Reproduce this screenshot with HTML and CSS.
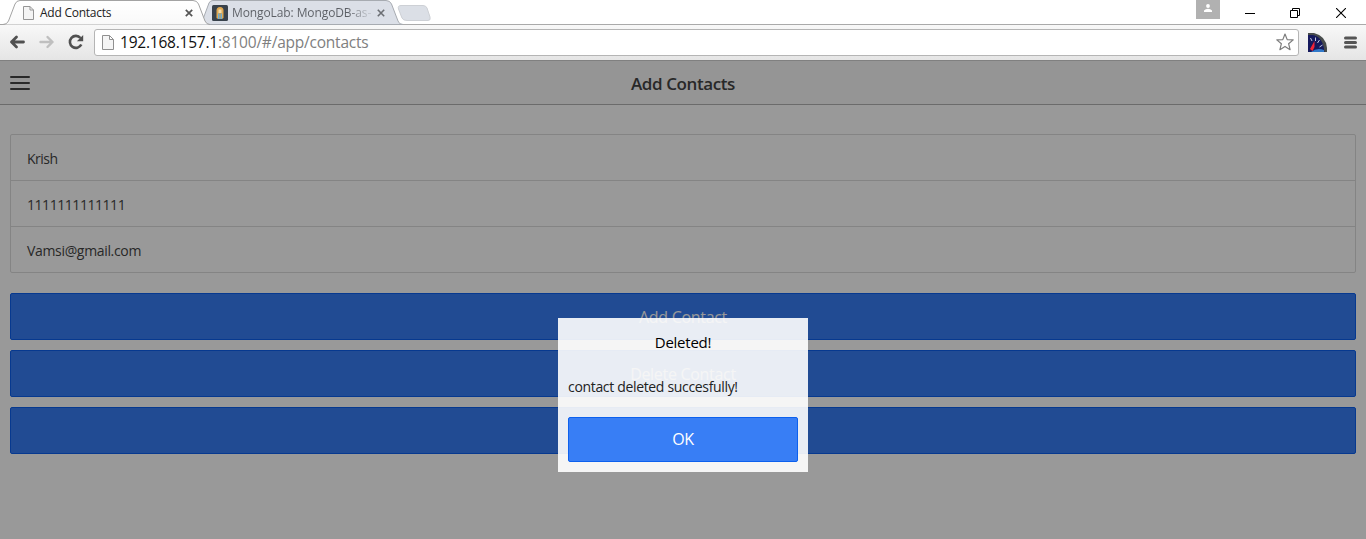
FILE: index.html
```html
<!DOCTYPE html>
<html lang="en">
<head>
<meta charset="utf-8">
<title>Add Contacts</title>
<link rel="stylesheet" href="styles.css">
</head>
<body>
<div class="browser">
  <div class="tabstrip">
    <svg class="tab-shapes" width="440" height="25" viewBox="0 0 440 25">
      <defs><linearGradient id="tabfill" x1="0" y1="0" x2="0" y2="1"><stop offset="0" stop-color="#fff"/><stop offset="1" stop-color="#f9f9f9"/></linearGradient></defs>
      <path d="M201 24.5 L209 3 Q210 .5 213 .5 H386 Q390 .5 391.500 4 L398 21 Q399 24.500 403 24.500Z" fill="#dbdfe7" stroke="#a7abb1"/>
      <path d="M401 5.500 H423 Q426 5.500 427 8 L430 17 Q431 20.500 428 20.500 H407 Q403 20.500 402 18 L398.500 9 Q397.500 5.500 401 5.500Z" fill="#dbdfe6" stroke="#cdd0d5"/>
      <path d="M0 24.500 H3 Q7 24.500 8.500 21 L15 4 Q16.500 .5 20 .5 H193 Q197 .5 198.500 4 L205 21 Q206.500 24.500 210 24.500" fill="url(#tabfill)" stroke="#a3a3a3"/>
    </svg>
    <div class="tab tab-active">
      <svg width="11" height="14" viewBox="0 0 11 14"><path d="M.5 .5H7L10.500 4V13.500H.5Z M7 .5V4H10.500" fill="#f4f4f4" stroke="#959595"/></svg>
      <span class="tab-title first">Add Contacts</span>
      <svg class="close" width="8" height="8" viewBox="0 0 8 8"><path d="M.8 .8L7.200 7.200M7.200 .8L.8 7.200" stroke="#555" stroke-width="1.700"/></svg>
    </div>
    <div class="tab tab-back">
      <svg width="16" height="16" viewBox="0 0 16 16"><rect width="16" height="16" rx="1.500" fill="#39424b"/><path d="M4.500 13V5.500Q4.500 2 8 2T11.500 5.500V13L10 14H6Z" fill="#e0a850"/><path d="M6.500 4.500H9.500V8H6.500Z" fill="#f5dfad"/><path d="M6 8.500H10V14H6Z" fill="#6caed6"/><path d="M8 8V14" stroke="#d69a3d"/></svg>
      <span class="tab-title second">MongoLab: MongoDB-as-</span>
      <svg class="close" width="8" height="8" viewBox="0 0 8 8"><path d="M.8 .8L7.200 7.200M7.200 .8L.8 7.200" stroke="#6b6e73" stroke-width="1.600"/></svg>
    </div>
    <div class="window-controls">
      <span class="profile"><svg width="8" height="8" viewBox="0 0 8 8"><circle cx="4" cy="2" r="1.900" fill="#fff"/><path d="M0 8V6.500Q1.500 4.800 4 4.800T8 6.500V8Z" fill="#fff"/></svg></span>
      <svg class="minimize" width="10" height="10" viewBox="0 0 10 10"><path d="M0 5.500H10" stroke="#000"/></svg>
      <svg class="restore" width="10" height="10" viewBox="0 0 10 10"><path d="M.5 2.500H7.500V9.500H.5ZM2.500 2.500V.5H9.500V7.500H7.500" fill="none" stroke="#000"/></svg>
      <svg width="10" height="10" viewBox="0 0 10 10"><path d="M0 0L10 10M10 0L0 10" stroke="#000" stroke-width="1.100"/></svg>
    </div>
  </div>
  <div class="toolbar">
    <svg class="back" width="16" height="14" viewBox="0 0 16 14"><path d="M14.500 7H2.500M7.500 2L2.500 7L7.500 12" fill="none" stroke="#505050" stroke-width="2.800" stroke-linecap="round" stroke-linejoin="round"/></svg>
    <svg class="forward" width="16" height="14" viewBox="0 0 16 14"><path d="M1.500 7H13.500M8.500 2L13.500 7L8.500 12" fill="none" stroke="#bfbfbf" stroke-width="2.400" stroke-linecap="round" stroke-linejoin="round"/></svg>
    <svg class="reload" width="16" height="16" viewBox="0 0 16 16"><path d="M12.500 4A6 6 0 1 0 13.300 10.500" fill="none" stroke="#505050" stroke-width="2.600"/><path d="M15.200 1V7.300H8.900Z" fill="#505050"/></svg>
    <div class="address">
      <svg class="page-icon" width="12" height="15" viewBox="0 0 12 15"><path d="M.5 .5H7.500L11.500 4.500V14.500H.5Z M7.500 .5V4.500H11.500" fill="#f5f5f5" stroke="#909090"/></svg>
      <span class="url"><span class="host">192.168.157.1</span>:8100/#/app/contacts</span>
      <svg class="star" width="18" height="18" viewBox="0 0 18 18"><path d="M9 1L11.200 6.600L17.200 6.900L12.600 10.700L14.100 16.700L9 13.400L3.900 16.700L5.400 10.700L.8 6.900L6.800 6.600Z" fill="#fff" stroke="#7d7d7d" stroke-width="1.200" stroke-linejoin="round"/></svg>
    </div>
    <svg class="gauge" width="19" height="19" viewBox="0 0 19 19"><path d="M0 0H6Q18 3 19 15V19H0Z" fill="#484c4c"/><path d="M0 2H5Q15 4 16.500 19H0Z" fill="#15195d"/><path d="M3 19Q9 14 16 17V19Z" fill="#3179ca"/><path d="M2.500 5L4 8M7.500 4.500V8M11.500 7L9.500 10M14.500 12L11.500 14" stroke="#c3c8e0"/><path d="M6.500 8L6.500 14L4.500 18L2 16Z" fill="#f32336"/></svg>
    <svg class="menu" width="13" height="13" viewBox="0 0 13 13"><path d="M1.500 2H11.500M1.500 6.500H11.500M1.500 11H11.500" stroke="#555" stroke-width="3" stroke-linecap="round"/></svg>
  </div>
</div>
<main class="app">
  <header class="bar">
    <span class="hamburger"><i></i><i></i><i></i></span>
    <h1>Add Contacts</h1>
  </header>
  <section class="content">
    <div class="list">
      <div class="item krish">Krish</div>
      <div class="item digits">1111111111111</div>
      <div class="item email">Vamsi@gmail.com</div>
    </div>
    <button class="button">Add Contact</button>
    <button class="button">Delete Contact</button>
    <button class="button">Update Contact</button>
  </section>
  <div class="backdrop"></div>
  <div class="popup">
    <h3>Deleted!</h3>
    <p>contact deleted succesfully!</p>
    <button class="ok">OK</button>
  </div>
</main>
</body>
</html>
```
FILE: styles.css
```css
* { box-sizing: border-box; }
body { margin: 0; width: 1366px; height: 539px; overflow: hidden; font-family: "Open Sans", "Noto Sans", sans-serif; }
svg { display: block; flex: none; }
button { font: inherit; }
.browser { height: 60px; }
.tabstrip { height: 24px; display: flex; position: relative; background: #fff; }
.tab-shapes { position: absolute; left: 0; top: 0; z-index: 1; }
.tab { display: flex; align-items: center; height: 24px; padding-top: 2px; position: relative; z-index: 2; }
.tab-active { width: 204px; padding-left: 23px; }
.tab-back { width: 200px; padding-left: 8px; }
.tab-title { font-size: 12px; line-height: 20px; white-space: nowrap; color: #222; }
.first { width: 151px; padding-left: 6px; letter-spacing: -.25px; }
.second { width: 145px; padding-left: 4px; letter-spacing: -.1px; overflow: hidden; background: linear-gradient(90deg, #5b5e64 82%, #c3c7ce 97%); background-clip: text; color: transparent; }
.tab-back .close { margin-left: 4px; }
.window-controls { display: flex; margin-left: auto; align-items: center; padding: 2px 20px 0 0; height: 24px; }
.profile { display: flex; align-items: center; justify-content: center; width: 24px; height: 19px; background: #b1b1b1; align-self: flex-start; margin: -2px 25px 0 0; padding-bottom: 3px; }
.restore { margin: 0 36px 0 35px; }
.toolbar { display: flex; align-items: center; height: 36px; border-top: 1px solid #aaa; background: linear-gradient(#f8f8f8, #e5e5e5); padding: 0 9px 1px 9px; }
.back, .forward { margin-right: 14px; }
.reload { margin-right: 10px; margin-left: -1px; }
.address { width: 1205px; height: 27px; border: 1px solid #b5b5b5; border-radius: 3px; background: #fff; display: flex; align-items: center; padding: 0 4px 0 7px; }
.url { margin-left: 6px; font-size: 15.5px; line-height: 22px; letter-spacing: -.22px; color: #808080; }
.host { color: #111; }
.star { margin-left: auto; }
.gauge { margin-left: 9px; }
.menu { margin-left: auto; }
.app { position: relative; height: 479px; background: #fff; }
.bar { height: 45px; border-top: 1px solid #d5d5d5; border-bottom: 1px solid #b2b2b2; background: #f8f8f8; display: flex; align-items: center; padding: 0 10px; }
.hamburger { width: 20px; display: grid; gap: 4px; }
.hamburger i { height: 2px; background: #444; border-radius: 1px; }
h1 { flex: 1; margin: 2px 20px 0 0; text-align: center; font-size: 17px; line-height: 24px; font-weight: 600; color: #444; letter-spacing: -.4px; }
.content { padding: 29px 10px 0; }
.list { border: 1px solid #ddd; border-radius: 2px; margin-bottom: 20px; }
.item { height: 46px; border-bottom: 1px solid #ddd; padding: 3px 16px 0; line-height: 41px; font-size: 14px; color: #444; }
.item:last-child { height: 45px; border-bottom: 0; }
.krish { letter-spacing: -.5px; }
.digits { letter-spacing: -.45px; }
.email { letter-spacing: -.33px; }
.button { display: block; width: 100%; height: 47px; margin: 0 0 10px; padding: 0; border: 1px solid #0c60ee; border-radius: 2px; background: #387ef5; color: #fff; font-size: 16px; font-weight: 500; line-height: 42px; letter-spacing: -.3px; }
.backdrop { position: absolute; inset: 0; background: rgba(0,0,0,.4); }
.popup { position: absolute; left: 558px; top: 258px; width: 250px; height: 154px; background: rgba(255,255,255,.9); padding: 13px 10px 10px; }
h3 { margin: 0; text-align: center; font-size: 15px; font-weight: 500; line-height: 22px; color: #000; letter-spacing: -.25px; }
p { margin: 24px 0 0; height: 40px; font-size: 14px; line-height: 20px; color: #222; white-space: nowrap; letter-spacing: -.33px; }
.ok { display: block; width: 100%; height: 45px; padding: 0; border: 1px solid #0c60ee; border-radius: 2px; background: #387ef5; color: #fff; font-size: 16px; font-weight: 500; line-height: 41px; letter-spacing: -.3px; }
```
